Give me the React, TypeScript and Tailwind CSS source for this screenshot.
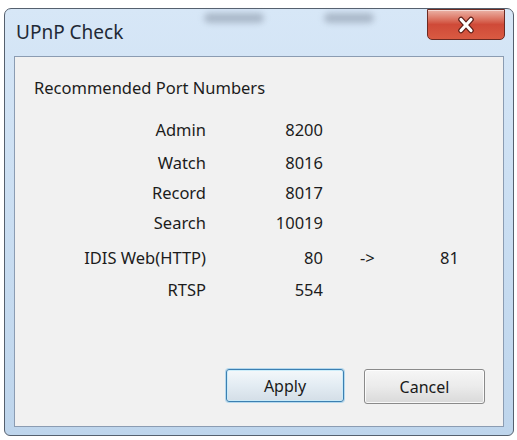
import React from "react";

type PortRow = {
  label: string;
  port: string;
  mapped?: string;
  gap: string;
};

// spacing between rows is uneven in the original dialog, keep it per row
const ROWS: PortRow[] = [
  { label: "Admin", port: "8200", gap: "mt-0" },
  { label: "Watch", port: "8016", gap: "mt-[3px]" },
  { label: "Record", port: "8017", gap: "mt-0" },
  { label: "Search", port: "10019", gap: "mt-0" },
  { label: "IDIS Web(HTTP)", port: "80", mapped: "81", gap: "mt-[5px]" },
  { label: "RTSP", port: "554", gap: "mt-[2px]" },
];

const font = "font-['Noto_Sans','Open_Sans',sans-serif]";

function CloseGlyph() {
  return (
    <svg width="20" height="18" viewBox="0 0 20 18">
      <path d="M5 3.5 L15 14.5 M15 3.5 L5 14.5" stroke="#5a1c16" strokeWidth="5.5" strokeLinecap="round" />
      <path d="M5 3.5 L15 14.5 M15 3.5 L5 14.5" stroke="#ffffff" strokeWidth="3.2" strokeLinecap="round" />
    </svg>
  );
}

export default function App() {
  return (
    <div className={`h-[440px] w-[517px] overflow-hidden bg-white pl-[4px] pt-[8px] ${font}`}>
      <div className="relative flex h-[428px] w-[510px] flex-col rounded-t-[7px] rounded-b-[6px] border border-[#55606e] bg-gradient-to-b from-[#d7e7f7] via-[#cadef2] to-[#bed5ec] px-[9px] pb-[8px]">
        {/* faint titles of windows behind the glass */}
        <div className="pointer-events-none absolute left-[199px] top-[4px] h-[10px] w-[60px] rounded-full bg-[#8d9aab] opacity-60 blur-[3px]" />
        <div className="pointer-events-none absolute left-[319px] top-[4px] h-[10px] w-[50px] rounded-full bg-[#8d9aab] opacity-60 blur-[3px]" />

        <div className="flex h-[47px] items-start">
          <span className="mt-[12px] pl-[2px] text-[19px] leading-[22px] text-[#1f2a36]">UPnP Check</span>
          <button
            type="button"
            className="ml-auto -mr-[1px] flex h-[31px] w-[78px] items-center justify-center rounded-b-[5px] border border-[#6b2a22] bg-gradient-to-b from-[#eab2a6] via-[#cf4a38] to-[#d95a42] shadow-[inset_0_1px_0_rgba(255,255,255,0.5)]"
          >
            <CloseGlyph />
          </button>
        </div>

        <div className="flex flex-1 flex-col border border-[#8b9cb2] bg-[#f1f1f1] pl-[19px] pr-[18px]">
          <div className="mt-[20px] text-[16.5px] leading-[22px] text-[#1c1c1c]">Recommended Port Numbers</div>

          <div className="mt-[16px] flex flex-col text-[16.5px] text-[#1c1c1c]">
            {ROWS.map((r) => (
              <div key={r.label} className={`flex h-[30px] items-center ${r.gap}`}>
                <div className="w-[172px] text-right">{r.label}</div>
                <div className="w-[117px] text-right">{r.port}</div>
                {r.mapped ? (
                  <>
                    <div className="ml-[37px] w-[20px]">-&gt;</div>
                    <div className="ml-[60px]">{r.mapped}</div>
                  </>
                ) : null}
              </div>
            ))}
          </div>

          <div className="mt-auto mb-[22px] flex justify-end gap-[20px]">
            <button
              type="button"
              className="h-[33px] w-[118px] rounded-[3px] border border-[#3c7fb1] bg-gradient-to-b from-[#f4f8fb] via-[#e3ecf3] to-[#d4dee7] text-[16px] text-[#1a1a1a] shadow-[0_0_0_1px_rgba(140,200,235,0.6),inset_0_0_0_1px_rgba(200,235,250,0.9)]"
            >
              Apply
            </button>
            <button
              type="button"
              className="h-[35px] w-[121px] rounded-[3px] border border-[#8a8a8a] bg-gradient-to-b from-[#f6f6f6] via-[#ebebeb] to-[#d9d9d9] text-[16px] text-[#1a1a1a] shadow-[inset_0_0_0_1px_rgba(255,255,255,0.8)]"
            >
              Cancel
            </button>
          </div>
        </div>
      </div>
    </div>
  );
}
